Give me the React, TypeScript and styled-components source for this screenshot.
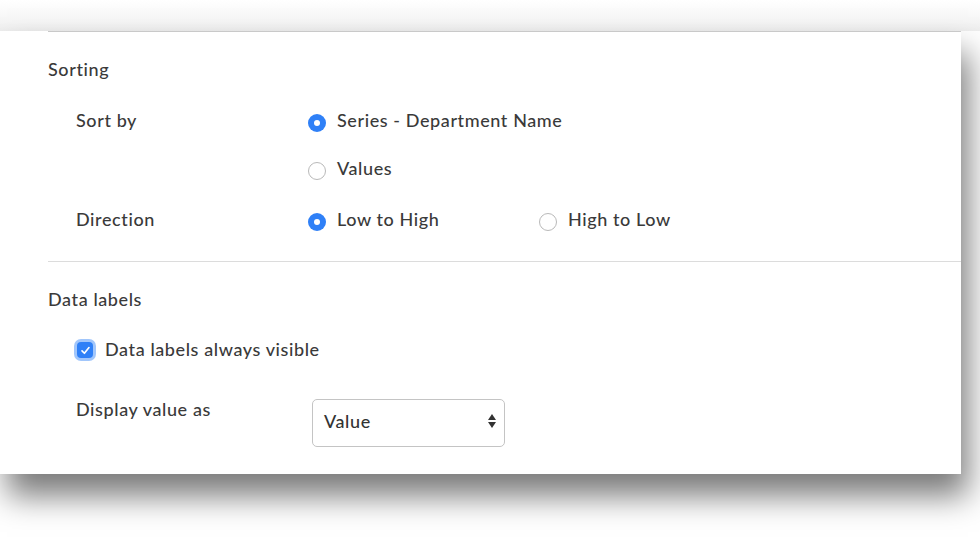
import React from 'react';
import styled, { createGlobalStyle } from 'styled-components';

const GlobalStyle = createGlobalStyle`
  html, body {
    margin: 0;
    padding: 0;
    background: #ffffff;
  }
  body {
    font-family: Lato, "Open Sans", "Liberation Sans", sans-serif;
    color: #3a3a3a;
    letter-spacing: 0.6px;
    -webkit-font-smoothing: antialiased;
  }
`;

const Stage = styled.div`
  width: 980px;
  height: 537px;
  overflow: hidden;
  padding-top: 31px;
  box-sizing: border-box;
  background: linear-gradient(to bottom, #ffffff 0px, #f6f6f6 20px, #eeeeee 31px, #ffffff 31px);
`;

const Panel = styled.div`
  width: 961px;
  height: 443px;
  box-sizing: border-box;
  padding-left: 48px;
  background: #ffffff;
  box-shadow: 7px 22px 30px rgba(0, 0, 0, 0.52);
`;

type RuleProps = {
  strong?: boolean;
};

const Rule = styled.div<RuleProps>`
  height: 1px;
  background: ${(props) => (props.strong ? '#c9c9c9' : '#dcdcdc')};
`;

const Section = styled.section`
  padding-top: 25px;
`;

const SectionTitle = styled.h3`
  margin: 0;
  font-size: 18px;
  font-weight: 500;
  line-height: 24px;
  color: #3a3a3a;
`;

const FieldRow = styled.div`
  display: grid;
  grid-template-columns: 232px 1fr;
  align-items: start;
  padding-left: 28px;
  margin-top: 27px;
`;

const FieldLabel = styled.div`
  font-size: 18px;
  font-weight: 500;
  line-height: 24px;
`;

type OptionsProps = {
  inline?: boolean;
};

const Options = styled.div<OptionsProps>`
  display: flex;
  flex-direction: ${(props) => (props.inline ? 'row' : 'column')};
  gap: ${(props) => (props.inline ? '0' : '24px')};
`;

type OptionProps = {
  width?: number;
};

const Option = styled.label<OptionProps>`
  display: flex;
  align-items: center;
  gap: 11px;
  width: ${(props) => (props.width ? `${props.width}px` : 'auto')};
  font-size: 18px;
  font-weight: 500;
  line-height: 24px;
  cursor: pointer;
`;

type RadioProps = {
  checked?: boolean;
};

const Radio = styled.span<RadioProps>`
  flex: none;
  width: 18px;
  height: 18px;
  margin-top: 6px;
  border-radius: 50%;
  box-sizing: border-box;
  display: flex;
  align-items: center;
  justify-content: center;
  background: ${(props) => (props.checked ? '#2f80f7' : '#ffffff')};
  border: ${(props) => (props.checked ? 'none' : '1px solid #b9b9b9')};

  &::after {
    content: '';
    display: ${(props) => (props.checked ? 'block' : 'none')};
    width: 6px;
    height: 6px;
    border-radius: 50%;
    background: #ffffff;
  }
`;

const DividerWrap = styled.div`
  margin-top: 30px;
`;

const CheckRow = styled.label`
  display: flex;
  align-items: center;
  gap: 12px;
  padding-left: 29px;
  margin-top: 26px;
  font-size: 18px;
  font-weight: 500;
  line-height: 24px;
  cursor: pointer;
`;

const CheckBox = styled.span`
  flex: none;
  width: 16px;
  height: 16px;
  margin-top: 2px;
  border-radius: 4px;
  background: #2f80f7;
  display: flex;
  align-items: center;
  justify-content: center;
  box-shadow: 0 0 0 3px rgba(47, 128, 247, 0.45);
`;

const SelectRow = styled(FieldRow)`
  grid-template-columns: 236px 1fr;
  margin-top: 36px;
`;

const SelectBox = styled.div`
  width: 193px;
  height: 48px;
  margin-top: 2px;
  box-sizing: border-box;
  border: 1px solid #c4c4c4;
  border-radius: 5px;
  padding: 0 7px 4px 11px;
  display: flex;
  align-items: center;
  justify-content: space-between;
  font-size: 18px;
  font-weight: 500;
  color: #333333;
  background: #ffffff;
`;

const Sorting = () => (
  <Section>
    <SectionTitle>Sorting</SectionTitle>
    <FieldRow>
      <FieldLabel>Sort by</FieldLabel>
      <Options>
        <Option>
          <Radio checked />
          Series - Department Name
        </Option>
        <Option>
          <Radio />
          Values
        </Option>
      </Options>
    </FieldRow>
    <FieldRow>
      <FieldLabel>Direction</FieldLabel>
      <Options inline>
        <Option width={231}>
          <Radio checked />
          Low to High
        </Option>
        <Option>
          <Radio />
          High to Low
        </Option>
      </Options>
    </FieldRow>
  </Section>
);

const DataLabels = () => (
  <Section>
    <SectionTitle>Data labels</SectionTitle>
    <CheckRow>
      <CheckBox>
        <svg width="11" height="11" viewBox="0 0 12 12" fill="none">
          <path d="M2.2 6.4 L4.8 9 L9.8 2.8" stroke="#ffffff" strokeWidth="1.8" strokeLinecap="round" strokeLinejoin="round" />
        </svg>
      </CheckBox>
      Data labels always visible
    </CheckRow>
    <SelectRow>
      <FieldLabel>Display value as</FieldLabel>
      <SelectBox>
        <span>Value</span>
        <svg width="10" height="18" viewBox="0 0 10 18">
          <path d="M5 2 L9 8 L1 8 Z" fill="#333333" />
          <path d="M5 16 L9 10 L1 10 Z" fill="#333333" />
        </svg>
      </SelectBox>
    </SelectRow>
  </Section>
);

const App = () => (
  <>
    <GlobalStyle />
    <Stage>
      <Panel>
        <Rule strong />
        <Sorting />
        <DividerWrap>
          <Rule />
        </DividerWrap>
        <DataLabels />
      </Panel>
    </Stage>
  </>
);

export default App;
